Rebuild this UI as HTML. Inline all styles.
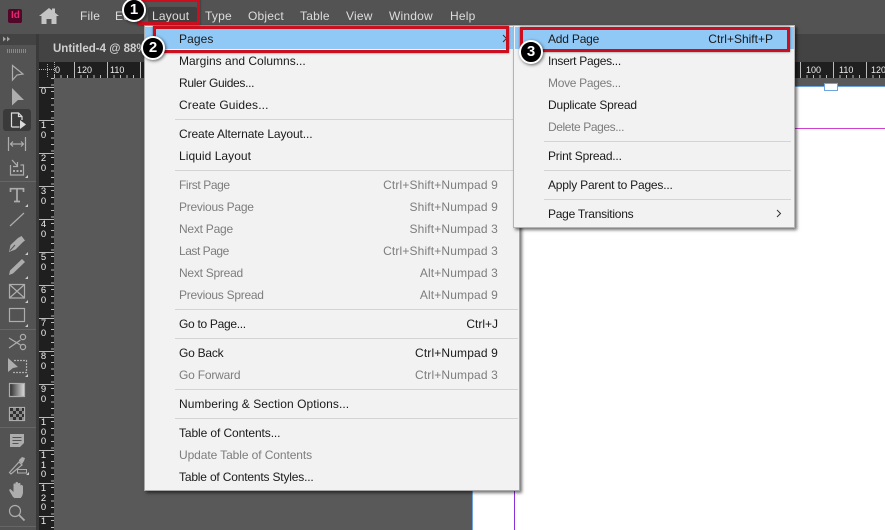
<!DOCTYPE html>
<html><head><meta charset="utf-8"><style>
html,body{margin:0;padding:0}
body{width:885px;height:530px;position:relative;overflow:hidden;background:#595959;font-family:"Liberation Sans",sans-serif;font-size:12px}
.a{position:absolute}
.t{position:absolute;white-space:nowrap;line-height:16px;letter-spacing:.2px}
.m{color:#dcdcdc;top:8px}
.i{color:#1a1a1a;left:179px;margin-top:1px;letter-spacing:-.1px}
.s{color:#1a1a1a;left:548px;margin-top:1px;letter-spacing:-.25px}
.d{color:#7d7d7d}
.r{text-align:right;right:387px;margin-top:1px;letter-spacing:.15px}
.r2{text-align:right;right:112px;margin-top:1px;letter-spacing:0}
.sep{position:absolute;height:1px;background:#d4d4d4}
.rl{position:absolute;left:39px;color:#eee;font:9.5px/10px "Liberation Sans",sans-serif;width:9px;text-align:center}
.rt{position:absolute;top:65px;color:#eee;font:9px/10px "Liberation Sans",sans-serif}
.box{position:absolute;border:3px solid #cc0f1f;box-shadow:0 0 2px rgba(0,0,0,.55);box-sizing:border-box}
.c{position:absolute;width:20px;height:20px;border-radius:50%;background:#000;border:2px solid #fff;box-shadow:1px 1px 3px rgba(0,0,0,.6);box-sizing:content-box;color:#fff;font:bold 15px/20px "Liberation Sans",sans-serif;text-align:center}
</style></head><body>
<div class="a" style="left:0;top:0;width:885px;height:34px;background:#535353"></div>
<div class="a" style="left:39px;top:34px;width:846px;height:28px;background:#434343"></div>
<div class="a" style="left:36px;top:34px;width:3px;height:496px;background:#3a3a3a"></div>
<div class="a" style="left:0;top:34px;width:36px;height:496px;background:#535353"></div>
<div class="a" style="left:0;top:34px;width:36px;height:11px;background:#434343"></div>

<div class="a" style="left:8px;top:9px;width:14px;height:14px;background:#52062a;border-radius:2px"></div>
<div class="a" style="left:11px;top:10px;color:#e8286c;font:bold 10px/12px 'Liberation Sans',sans-serif">Id</div>
<svg class="a" style="left:38px;top:7px" width="22" height="18"><path d="M1 9 11 1l3 2.400V1.500h3v4.300L21 9h-2.500v8H13.500v-5h-5v5H3.500V9z" fill="#c4c4c4"/></svg>

<div class="t m" style="left:80px">File</div>
<div class="t m" style="left:115px">Edit</div>
<div class="a" style="left:148px;top:7px;width:49px;height:17px;background:#404040;border-radius:2px"></div>
<div class="t m" style="left:152px">Layout</div>
<div class="t m" style="left:205px">Type</div>
<div class="t m" style="left:248px">Object</div>
<div class="t m" style="left:300px">Table</div>
<div class="t m" style="left:346px">View</div>
<div class="t m" style="left:389px">Window</div>
<div class="t m" style="left:450px">Help</div>

<div class="t" style="left:53px;top:41px;color:#cfcfcf;font-weight:bold;font-size:11.5px;letter-spacing:0">Untitled-4 @ 88%</div>

<!-- page -->
<div class="a" style="left:472px;top:86px;width:413px;height:444px;background:#fff;border-left:1px solid #6fa3de;border-top:1px solid #6fa3de;box-sizing:border-box"></div>
<div class="a" style="left:514px;top:128px;width:371px;height:1px;background:#d040d0"></div>
<div class="a" style="left:514px;top:128px;width:1px;height:402px;background:#8a30d8"></div>
<div class="a" style="left:824px;top:83px;width:12px;height:6px;background:#fff;border:1px solid #6fa3de"></div>

<!-- rulers -->
<div class="a" style="left:39px;top:62px;width:846px;height:16px;background:#1f1f1f"></div>
<div class="a" style="left:39px;top:78px;width:15px;height:452px;background:#1f1f1f"></div>
<div class="a" style="left:54px;top:75px;width:831px;height:3px;background:repeating-linear-gradient(90deg,#bbb 0 1px,transparent 1px 6.600px)"></div>
<div class="a" style="left:51px;top:78px;width:3px;height:452px;background:repeating-linear-gradient(180deg,#bbb 0 1px,transparent 1px 6.600px)"></div>
<div class="a" style="left:39px;top:87px;width:15px;height:443px;background:repeating-linear-gradient(180deg,#bbb 0 1px,transparent 1px 33px)"></div>
<div class="a" style="left:54px;top:62px;width:831px;height:16px;background:repeating-linear-gradient(90deg,transparent 0 20px,#bbb 20px 21px,transparent 21px 33px)"></div>
<svg class="a" style="left:39px;top:62px" width="16" height="16" fill="none" stroke="#aaa" stroke-dasharray="1 1"><path d="M0 7.500h15M8.500 2v14M15.500 0v16"/></svg>
<div class="rt" style="left:55px">0</div><div class="rt" style="left:77px">120</div><div class="rt" style="left:110px">110</div>
<div class="rt" style="left:806px">100</div><div class="rt" style="left:839px">110</div><div class="rt" style="left:871px">120</div>
<div class="rl" style="top:87px">0</div>
<div class="rl" style="top:121px">1<br>0</div>
<div class="rl" style="top:154px">2<br>0</div>
<div class="rl" style="top:187px">3<br>0</div>
<div class="rl" style="top:220px">4<br>0</div>
<div class="rl" style="top:253px">5<br>0</div>
<div class="rl" style="top:286px">6<br>0</div>
<div class="rl" style="top:319px">7<br>0</div>
<div class="rl" style="top:352px">8<br>0</div>
<div class="rl" style="top:385px">9<br>0</div>
<div class="rl" style="top:418px;line-height:9.500px">1<br>0<br>0</div>
<div class="rl" style="top:451px;line-height:9.500px">1<br>1<br>0</div>
<div class="rl" style="top:484px;line-height:9.500px">1<br>2<br>0</div>
<div class="rl" style="top:517px">1</div>

<!-- tools -->
<svg class="a" style="left:0;top:34px" width="36" height="496" viewBox="0 34 36 496" fill="none" stroke="#adadad" stroke-width="1.200">
<rect x="3" y="109" width="28" height="22" rx="3" fill="#3a3a3a" stroke="none"/>
<path d="M3 36.500 6 39 3 41.500zM7 36.500 10 39 7 41.500z" fill="#a5a5a5" stroke="none"/>
<path d="M7.500 49v4M9.500 49v4M11.500 49v4M13.500 49v4M15.500 49v4M17.500 49v4M19.500 49v4M21.500 49v4M23.500 49v4M25.500 49v4" stroke="#888" stroke-width="1"/>
<path d="M12.500 65.500 23 74l-6 1-4.500 5z"/>
<path d="M12 88l12 12-6 0-6 5.500z" fill="#adadad" stroke="none"/>
<path d="M11.500 127v-14h7l3.500 3.500V120M18.500 113v3.500H22M11.500 127h8" stroke="#dcdcdc"/><path d="M20 120v9l6-4.500z" fill="#dcdcdc" stroke="none"/>
<path d="M8.500 137v14M25.500 137v14M11 144h12M13 141.500 10.500 144l2.500 2.500M21 141.500l2.500 2.500-2.500 2.500"/>
<path d="M10.500 165v10h13v-10h-3M12 160l5.500 6M17.500 162v4.500H13"/><path d="M13 170h2v2h-2zM16.500 170h2v2h-2zM20 170h2v2h-2z" fill="#adadad" stroke="none"/>
<path d="M0 181.500h36" stroke="#666" stroke-width="1"/>
<path d="M10.500 192v-3.300h13V192M17 189v12.500M14 201.500h6" stroke-width="1.700"/>
<path d="M10 226 24 213"/>
<path d="M21.500 236l3.500 4.500-2 1.500-7.500 7.500-6.500 2.500 1.500-7 7.500-7z" fill="#adadad" stroke="none"/><path d="M10 250.500 15 245" stroke="#535353" stroke-width="1"/>
<path d="M22 259l3 3-12 11.500-4 1.500 1-4.500z" fill="#adadad" stroke="none"/>
<path d="M9.500 284.500h15v13.500h-15zM9.500 284.500l15 13.500M24.500 284.500l-15 13.500"/>
<rect x="9.500" y="308.500" width="15" height="13"/>
<path d="M0 329.500h36" stroke="#666" stroke-width="1"/>
<path d="M9 338l11.500 7M9 348l11.500-8"/><circle cx="23" cy="337" r="2.600"/><circle cx="23" cy="347" r="2.600"/>
<path d="M8 358v14l5-4 5-1z" fill="#adadad" stroke="none"/><path d="M14 360.500h12.500v12H13" stroke-dasharray="2 1"/>
<defs><linearGradient id="g" x1="0" x2="1"><stop offset="0" stop-color="#2a2a2a"/><stop offset="1" stop-color="#ddd"/></linearGradient></defs>
<rect x="9.500" y="383.500" width="15" height="13" fill="url(#g)"/>
<rect x="9.500" y="407.500" width="15" height="13" fill="#888"/>
<path d="M10 408h3v3h-3zM16 408h3v3h-3zM22 408h2v3h-2zM13 411h3v3h-3zM19 411h3v3h-3zM10 414h3v3h-3zM16 414h3v3h-3zM22 414h2v3h-2zM13 417h3v3h-3zM19 417h3v3h-3z" fill="#2f2f2f" stroke="none"/>
<path d="M0 427.500h36" stroke="#666" stroke-width="1"/>
<path d="M10 434h14v9l-4 4H10z" fill="#adadad" stroke="none"/><path d="M12.500 437.500h9M12.500 440.500h9M12.500 443.500h6" stroke="#535353" stroke-width="1"/>
<path d="M9.500 472.500 19 462l3 3-11 9z"/><path d="M19 460l3-3 3 1-1 3-2 3-3-3z" fill="#adadad" stroke="none"/><rect x="17.500" y="469.500" width="9" height="3.500" stroke-width="1"/>
<path d="M13 497l-3.500-6c-.8-2 1-2.500 2-1l2 2v-7.500c0-1.500 2-1.500 2 0v-1.500c0-1.500 2.500-1.500 2.500 0v1c0-1.500 2.500-1.500 2.500 0v2c0-1.500 2.500-1.200 2.500.5v6c0 2.500-2 5.500-2.500 5.500h-6z" fill="#adadad" stroke="none"/>
<circle cx="15" cy="511" r="5.500"/><path d="M19 515l5.500 5.500" stroke-width="1.800"/>
<path d="M0 526.500h36" stroke="#666" stroke-width="1"/>
<path d="M28 178v-3l-3 3zM28 207v-3l-3 3zM28 255v-3l-3 3zM28 279v-3l-3 3zM28 303v-3l-3 3zM28 327v-3l-3 3zM28 377v-3l-3 3zM29 475v-3l-3 3z" fill="#ccc" stroke="none"/>
</svg>

<!-- main menu -->
<div class="a" style="left:144px;top:25px;width:376px;height:466px;background:#f2f2f2;border:1px solid #a8a8a8;box-sizing:border-box;box-shadow:2px 2px 3px rgba(0,0,0,.55)"></div>
<div class="a" style="left:145px;top:27px;width:374px;height:22px;background:#90c8f6"></div>
<div class="t i" style="top:30px;letter-spacing:.1px">Pages</div>
<svg class="a" style="left:502px;top:34px" width="6" height="9" fill="none" stroke="#333"><path d="M1 1l3.500 3.500L1 8"/></svg>
<div class="t i" style="top:52px;letter-spacing:0">Margins and Columns...</div>
<div class="t i" style="top:74px;letter-spacing:-.33px">Ruler Guides...</div>
<div class="t i" style="top:96px;letter-spacing:.14px">Create Guides...</div>
<div class="sep" style="left:175px;top:119px;width:343px"></div>
<div class="t i" style="top:125px">Create Alternate Layout...</div>
<div class="t i" style="top:147px;letter-spacing:.05px">Liquid Layout</div>
<div class="sep" style="left:175px;top:170px;width:343px"></div>
<div class="t i d" style="top:176px;letter-spacing:-.4px">First Page</div><div class="t r d" style="top:176px">Ctrl+Shift+Numpad 9</div>
<div class="t i d" style="top:198px;letter-spacing:-.26px">Previous Page</div><div class="t r d" style="top:198px">Shift+Numpad 9</div>
<div class="t i d" style="top:220px;letter-spacing:-.24px">Next Page</div><div class="t r d" style="top:220px">Shift+Numpad 3</div>
<div class="t i d" style="top:242px;letter-spacing:-.47px">Last Page</div><div class="t r d" style="top:242px">Ctrl+Shift+Numpad 3</div>
<div class="t i d" style="top:264px;letter-spacing:-.25px">Next Spread</div><div class="t r d" style="top:264px">Alt+Numpad 3</div>
<div class="t i d" style="top:286px;letter-spacing:-.27px">Previous Spread</div><div class="t r d" style="top:286px">Alt+Numpad 9</div>
<div class="sep" style="left:175px;top:309px;width:343px"></div>
<div class="t i" style="top:315px;letter-spacing:-.3px">Go to Page...</div><div class="t r" style="top:315px;color:#1a1a1a;letter-spacing:0">Ctrl+J</div>
<div class="sep" style="left:175px;top:338px;width:343px"></div>
<div class="t i" style="top:344px;letter-spacing:-.23px">Go Back</div><div class="t r" style="top:344px;color:#1a1a1a">Ctrl+Numpad 9</div>
<div class="t i d" style="top:366px;letter-spacing:-.2px">Go Forward</div><div class="t r d" style="top:366px">Ctrl+Numpad 3</div>
<div class="sep" style="left:175px;top:389px;width:343px"></div>
<div class="t i" style="top:395px;letter-spacing:.07px">Numbering &amp; Section Options...</div>
<div class="sep" style="left:175px;top:418px;width:343px"></div>
<div class="t i" style="top:424px">Table of Contents...</div>
<div class="t i d" style="top:446px;letter-spacing:-.09px">Update Table of Contents</div>
<div class="t i" style="top:468px;letter-spacing:-.18px">Table of Contents Styles...</div>

<!-- submenu -->
<div class="a" style="left:513px;top:25px;width:282px;height:203px;background:#f2f2f2;border:1px solid #b4b4b4;box-sizing:border-box;box-shadow:2px 2px 3px rgba(0,0,0,.55)"></div>
<div class="a" style="left:515px;top:27px;width:279px;height:22px;background:#90c8f6"></div>
<div class="t s" style="top:30px;letter-spacing:-.2px">Add Page</div><div class="t r2" style="top:30px;color:#1a1a1a">Ctrl+Shift+P</div>
<div class="t s" style="top:52px;letter-spacing:-.3px">Insert Pages...</div>
<div class="t s d" style="top:74px;letter-spacing:-.3px">Move Pages...</div>
<div class="t s" style="top:96px;letter-spacing:-.2px">Duplicate Spread</div>
<div class="t s d" style="top:118px;letter-spacing:-.4px">Delete Pages...</div>
<div class="sep" style="left:544px;top:141px;width:247px"></div>
<div class="t s" style="top:147px;letter-spacing:-.2px">Print Spread...</div>
<div class="sep" style="left:544px;top:170px;width:247px"></div>
<div class="t s" style="top:176px;letter-spacing:-.2px">Apply Parent to Pages...</div>
<div class="sep" style="left:544px;top:199px;width:247px"></div>
<div class="t s" style="top:205px">Page Transitions</div>
<svg class="a" style="left:776px;top:209px" width="6" height="9" fill="none" stroke="#333"><path d="M1 1l3.500 3.500L1 8"/></svg>

<!-- annotations -->
<div class="box" style="left:138px;top:-1px;width:62px;height:26px"></div>
<div class="box" style="left:153px;top:26px;width:356px;height:27px"></div>
<div class="box" style="left:520px;top:27px;width:270px;height:25px"></div>
<div class="c" style="left:122px;top:-2px">1</div>
<div class="c" style="left:141px;top:36px">2</div>
<div class="c" style="left:519px;top:40px">3</div>
</body></html>
